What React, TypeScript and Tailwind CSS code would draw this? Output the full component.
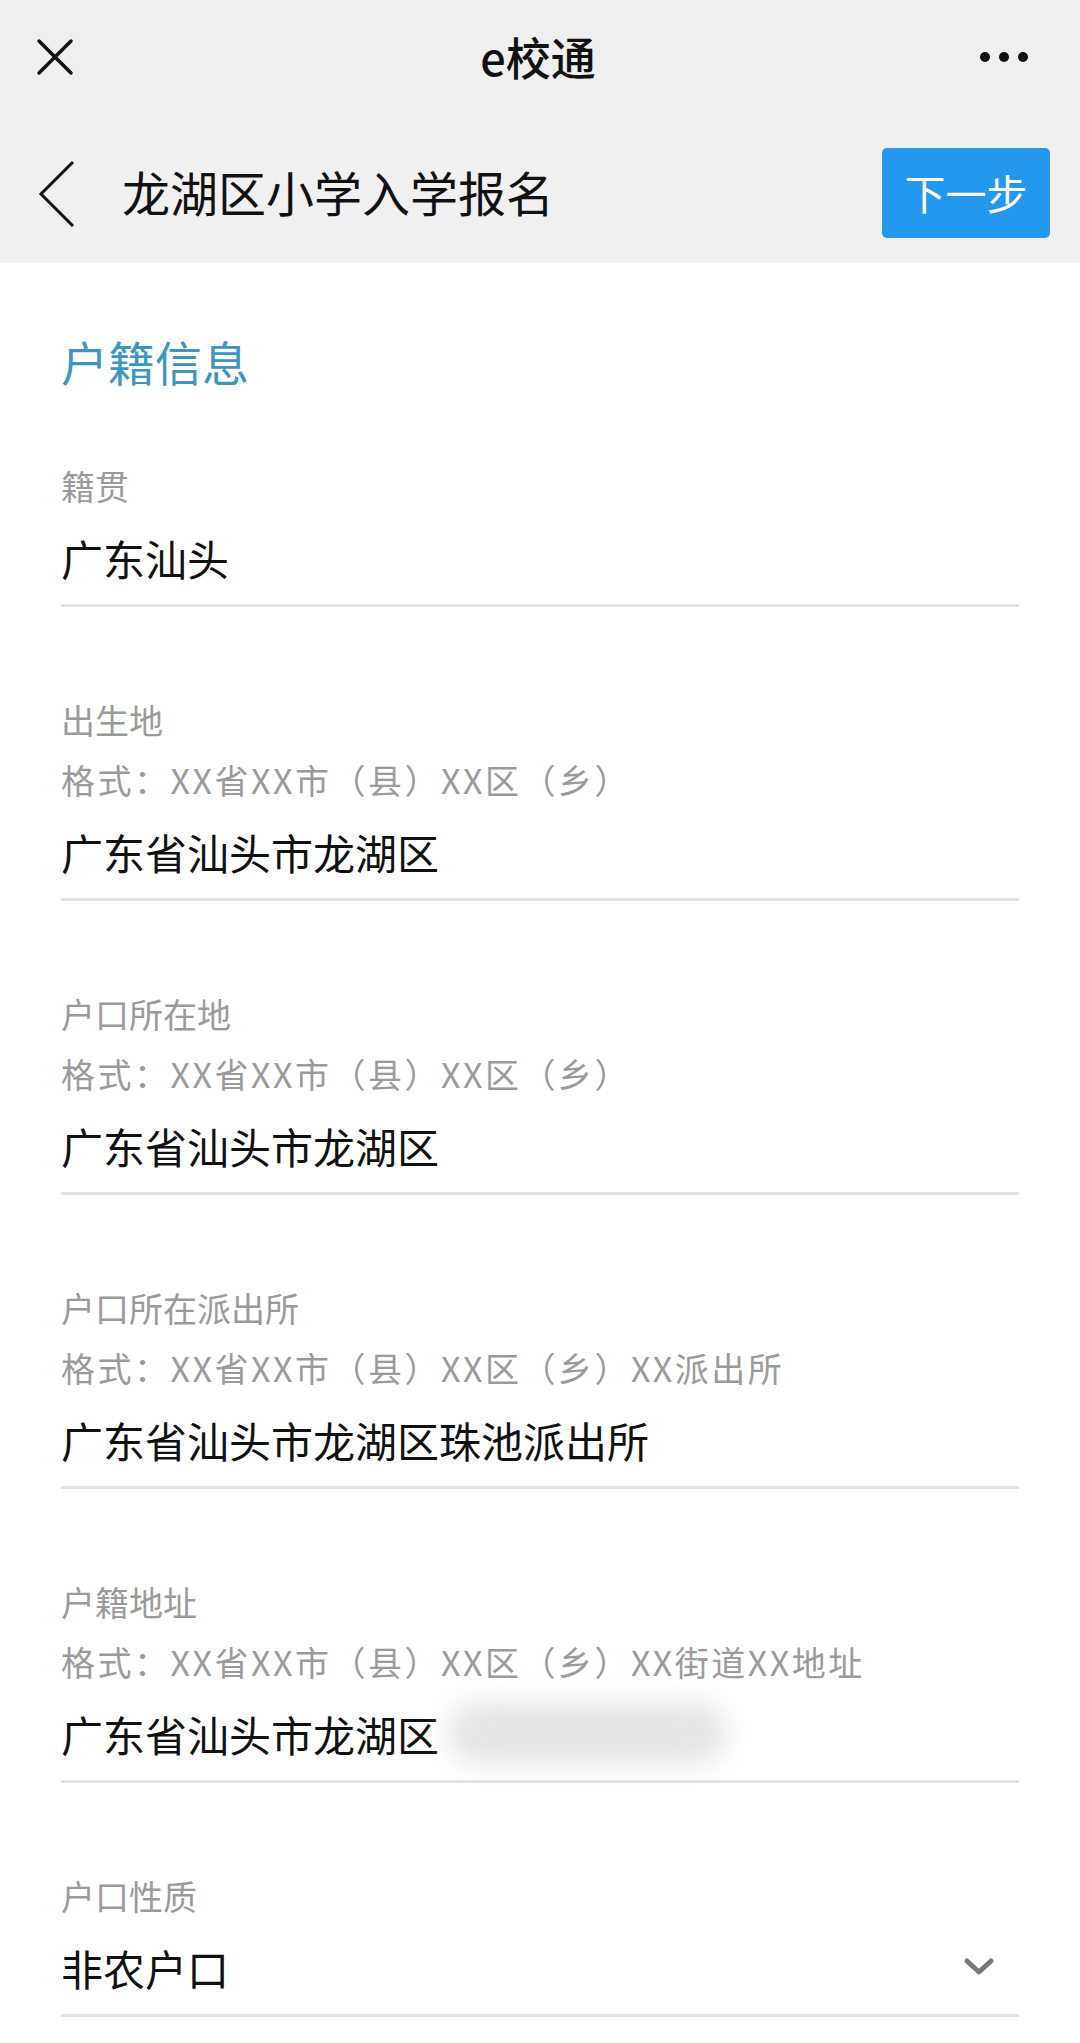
import React from 'react';

type Field = {
  label: string;
  hint?: string;
  value: string;
  blurred?: boolean;
  select?: boolean;
};

const fields: Field[] = [
  { label: '籍贯', value: '广东汕头' },
  { label: '出生地', hint: '格式：XX省XX市（县）XX区（乡）', value: '广东省汕头市龙湖区' },
  { label: '户口所在地', hint: '格式：XX省XX市（县）XX区（乡）', value: '广东省汕头市龙湖区' },
  {
    label: '户口所在派出所',
    hint: '格式：XX省XX市（县）XX区（乡）XX派出所',
    value: '广东省汕头市龙湖区珠池派出所',
  },
  {
    label: '户籍地址',
    hint: '格式：XX省XX市（县）XX区（乡）XX街道XX地址',
    value: '广东省汕头市龙湖区',
    blurred: true,
  },
  { label: '户口性质', value: '非农户口', select: true },
];

function FormField({ field, first }: { field: Field; first: boolean }) {
  return (
    <div className={`border-b-[3px] border-[#e2e2e2] pb-[2px] ${first ? 'mt-[65px]' : 'mt-[83px]'}`}>
      <div className="text-[34px] leading-[60px] text-[#9a9a9a]">{field.label}</div>
      {field.hint && (
        <div className="text-[34px] leading-[60px] tracking-[2.5px] text-[#9a9a9a]">{field.hint}</div>
      )}
      <div className="flex h-[86px] items-center pb-[4px] text-[42px] text-[#111]">
        <span>{field.value}</span>
        {field.blurred && (
          <span className="ml-[8px] inline-block h-[64px] w-[280px] rounded-full bg-[#e6e6e6] blur-md" />
        )}
        {field.select && (
          <svg className="ml-auto mr-[24px] h-[20px] w-[32px]" viewBox="0 0 32 20" fill="none">
            <path d="M4 4 L16 15 L28 4" stroke="#787878" strokeWidth="5" strokeLinecap="round" strokeLinejoin="round" />
          </svg>
        )}
      </div>
    </div>
  );
}

export default function App() {
  return (
    <div
      className="min-h-[2043px] w-[1080px] overflow-hidden bg-white"
      style={{ fontFamily: '"Noto Sans CJK SC", "Noto Sans", sans-serif' }}
    >
      {/* title bar */}
      <div className="flex h-[124px] items-center bg-[#efefef] px-[36px] pb-[10px]">
        <svg className="h-[38px] w-[38px]" viewBox="0 0 38 38" fill="none">
          <path d="M3 3 L35 35 M35 3 L3 35" stroke="#111" strokeWidth="3.5" strokeLinecap="round" />
        </svg>
        <div className="flex-1 pl-[22px] text-center text-[45px] font-medium text-[#111]">e校通</div>
        <div className="flex items-center gap-[9px] pr-[16px]">
          <span className="h-[10px] w-[10px] rounded-full bg-[#111]" />
          <span className="h-[10px] w-[10px] rounded-full bg-[#111]" />
          <span className="h-[10px] w-[10px] rounded-full bg-[#111]" />
        </div>
      </div>

      {/* page header */}
      <div className="flex h-[139px] items-center bg-[#f0f0f0] pl-[38px] pr-[30px]">
        <svg className="h-[68px] w-[38px]" viewBox="0 0 38 68" fill="none">
          <path d="M35 2 L3 34 L35 66" stroke="#111" strokeWidth="3" strokeLinejoin="miter" />
        </svg>
        <div className="ml-[46px] flex-1 pb-[6px] text-[48px] text-[#111]">龙湖区小学入学报名</div>
        <button className="mb-[2px] flex h-[90px] w-[168px] items-center justify-center rounded-[5px] bg-[#2497ee] text-[41px] text-white">
          下一步
        </button>
      </div>

      {/* form */}
      <div className="px-[61px] pt-[68px]">
        <div className="text-[47px] leading-[60px] text-[#3d95c4]">户籍信息</div>
        {fields.map((f, i) => (
          <FormField key={f.label} field={f} first={i === 0} />
        ))}
      </div>
    </div>
  );
}
